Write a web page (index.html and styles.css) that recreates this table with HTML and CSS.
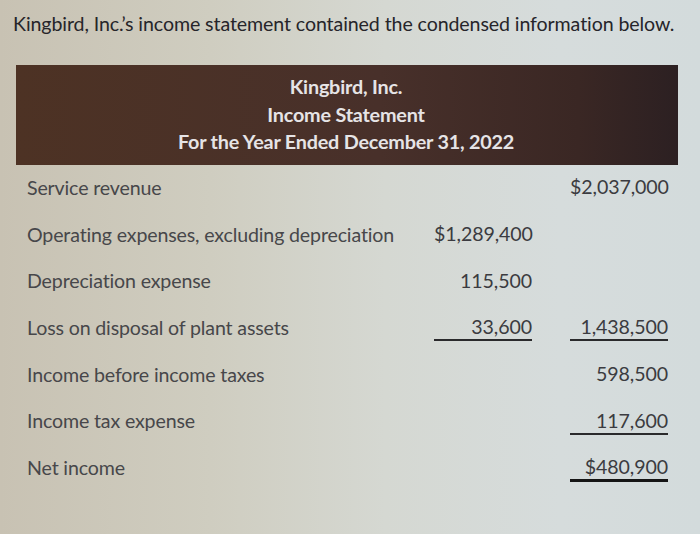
FILE: index.html
```html
<!DOCTYPE html>
<html lang="en">
<head>
<meta charset="utf-8">
<title>Kingbird, Inc. Income Statement</title>
<link rel="stylesheet" href="styles.css">
</head>
<body>
<main class="page">
  <p class="intro">Kingbird, Inc.’s income statement contained the condensed information below.</p>
  <header class="banner">
    <div>Kingbird, Inc.</div>
    <div>Income Statement</div>
    <div>For the Year Ended December 31, 2022</div>
  </header>
  <div class="statement">
    <div class="row">
      <span class="label">Service revenue</span>
      <span class="amt"></span>
      <span class="amt">$2,037,000</span>
    </div>
    <div class="row">
      <span class="label">Operating expenses, excluding depreciation</span>
      <span class="amt">$1,289,400</span>
      <span class="amt"></span>
    </div>
    <div class="row">
      <span class="label">Depreciation expense</span>
      <span class="amt">115,500</span>
      <span class="amt"></span>
    </div>
    <div class="row">
      <span class="label">Loss on disposal of plant assets</span>
      <span class="amt ul">33,600</span>
      <span class="amt ul">1,438,500</span>
    </div>
    <div class="row">
      <span class="label">Income before income taxes</span>
      <span class="amt"></span>
      <span class="amt">598,500</span>
    </div>
    <div class="row">
      <span class="label">Income tax expense</span>
      <span class="amt"></span>
      <span class="amt ul">117,600</span>
    </div>
    <div class="row">
      <span class="label">Net income</span>
      <span class="amt"></span>
      <span class="amt dul">$480,900</span>
    </div>
  </div>
</main>
</body>
</html>
```
FILE: styles.css
```css
html, body {
  margin: 0;
  padding: 0;
}
body {
  width: 700px;
  height: 534px;
  overflow: hidden;
  font-family: Lato, "Open Sans", "Liberation Sans", sans-serif;
  background: linear-gradient(90deg, #c8c2b3 0%, #cfcdc0 30%, #d5d8d2 55%, #d6dcdc 80%, #d3dbdc 100%);
  color: #3a3a3c;
}
.page {
  padding: 12px 22px 0 16px;
}
.intro {
  margin: 0 0 0 -3px;
  height: 53px;
  font-size: 19.6px;
  line-height: 24px;
  color: #26252a;
  letter-spacing: -0.1px;
  white-space: nowrap;
}
.banner {
  height: 100px;
  box-sizing: border-box;
  padding-top: 8px;
  background: linear-gradient(90deg, #4d3224 0%, #48302a 55%, #3a2724 85%, #2c2022 100%);
  color: #e6e4e6;
  font-weight: 700;
  font-size: 19.8px;
  line-height: 27.5px;
  text-align: center;
  letter-spacing: -0.2px;
  padding-right: 2px;
}
.statement {
  padding: 0 10px 0 11px;
}
.row {
  display: grid;
  grid-template-columns: 1fr 98px 98px;
  column-gap: 38px;
  align-items: center;
  height: 46.7px;
}
.label {
  font-size: 19.6px;
  color: #47474a;
  letter-spacing: -0.15px;
  white-space: nowrap;
  margin-top: -2px;
}
.amt {
  font-size: 19.6px;
  line-height: 20px;
  text-align: right;
  color: #3b3b40;
  letter-spacing: -0.1px;
  padding-bottom: 2px;
  border-bottom: 2px solid transparent;
  margin-top: 2px;
  white-space: nowrap;
}
.amt.ul {
  border-bottom-color: #2a2a2c;
}
.amt.dul {
  border-bottom: 3px solid #151515;
}
```
